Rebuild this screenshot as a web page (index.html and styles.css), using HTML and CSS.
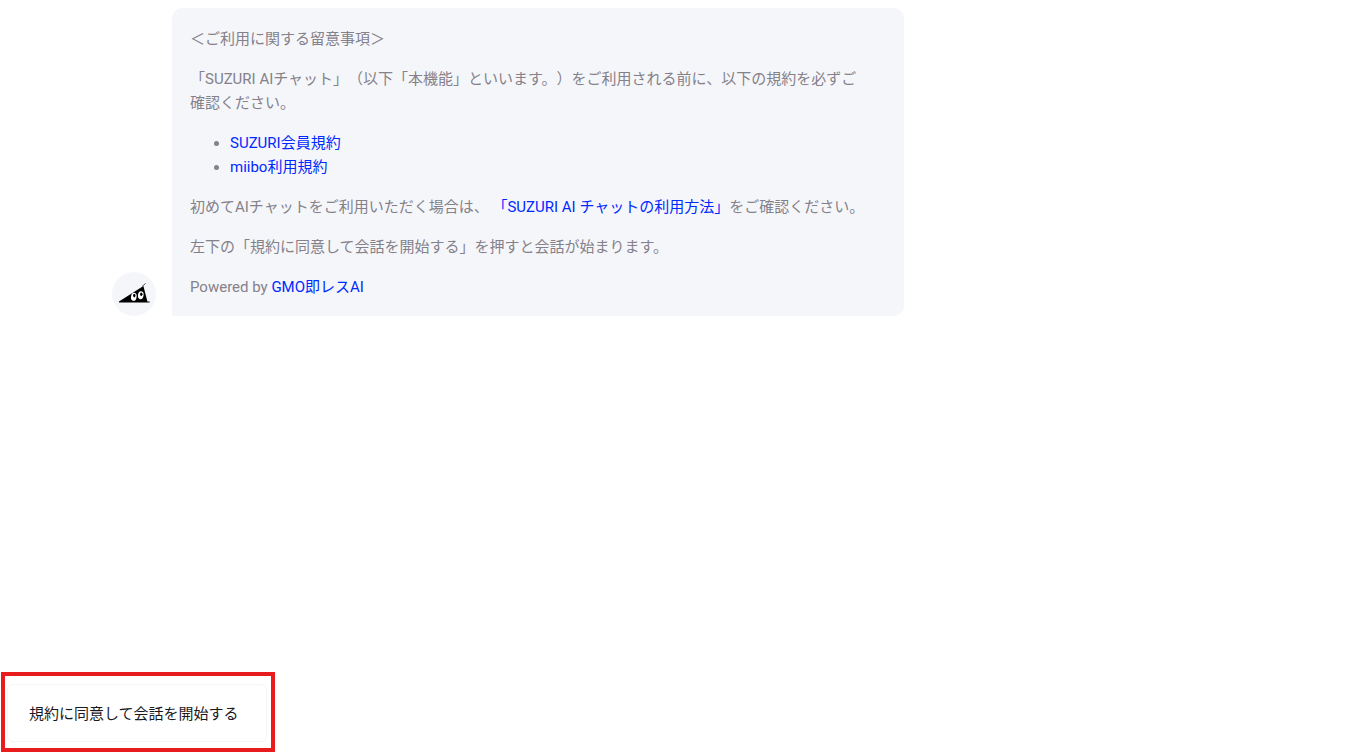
FILE: index.html
```html
<!DOCTYPE html>
<html lang="ja">
<head>
<meta charset="utf-8">
<meta name="viewport" content="width=device-width, initial-scale=1">
<title>SUZURI AIチャット</title>
<link rel="stylesheet" href="styles.css">
</head>
<body>
<main class="chat">
  <article class="message">
    <div class="avatar">
      <svg viewBox="0 0 44 44" role="img" aria-label="SUZURI">
        <path d="M7 30.6V29.6L31.4 14 35.4 29.4H37.6V30.6Z" fill="#000"/>
        <path d="M30 14.5 33.6 11.4" stroke="#555" fill="none"/>
        <g fill="#fff">
          <ellipse cx="21.8" cy="24.8" rx="2.8" ry="4" transform="rotate(8 21.8 24.8)"/>
          <ellipse cx="28.8" cy="23.2" rx="2.8" ry="4" transform="rotate(8 28.8 23.2)"/>
        </g>
        <ellipse cx="22.3" cy="23.6" rx="1.2" ry="1.8" fill="#000"/>
        <ellipse cx="29.3" cy="22.2" rx="1.2" ry="1.8" fill="#000"/>
      </svg>
    </div>
    <div class="bubble">
      <p>＜ご利用に関する留意事項＞</p>
      <p>「SUZURI AIチャット」（以下「本機能」といいます。）をご利用される前に、以下の規約を必ずご確認ください。</p>
      <ul>
        <li><a href="#">SUZURI会員規約</a></li>
        <li><a href="#">miibo利用規約</a></li>
      </ul>
      <p>初めてAIチャットをご利用いただく場合は、 <a href="#">「SUZURI AI チャットの利用方法」</a>をご確認ください。</p>
      <p>左下の「規約に同意して会話を開始する」を押すと会話が始まります。</p>
      <p>Powered by <a href="#">GMO即レスAI</a></p>
    </div>
  </article>
</main>
<footer class="actions">
  <div class="highlight">
    <button class="start" type="button">規約に同意して会話を開始する</button>
  </div>
</footer>
</body>
</html>
```

FILE: styles.css
```css
* {
  box-sizing: border-box;
}

body {
  display: flex;
  flex-direction: column;
  min-height: 100vh;
  margin: 0;
  background: #fff;
  color: #84818a;
  font: 15px/24px Roboto, "Noto Sans CJK JP", sans-serif;
  text-spacing-trim: space-all;
}

.chat {
  flex: 1;
  padding: 8px 112px;
}

.message {
  display: flex;
  align-items: flex-end;
  gap: 16px;
}

.avatar {
  flex: none;
  width: 44px;
  height: 44px;
  border-radius: 50%;
  background: #f5f6fa;
}

.avatar svg {
  display: block;
}

.bubble {
  display: flex;
  flex: 0 1 732px;
  flex-direction: column;
  gap: 16px;
  padding: 19px 36px 17px 18px;
  border-radius: 10px 10px 10px 0;
  background: #f5f6fa;
}

.bubble p,
.bubble ul {
  margin: 0;
}

.bubble ul {
  padding-left: 40px;
}

.bubble a {
  color: #0029ff;
  text-decoration: none;
}

.actions {
  display: flex;
  padding: 1px;
}

.highlight {
  padding: 8px 4px 6px 2px;
  border: 4px solid #e81c1c;
}

.start {
  min-width: 260px;
  padding: 17px 21px 15px;
  border: 1px solid #f5f5f7;
  border-radius: 6px;
  background: #fff;
  color: #1a1a1e;
  font: inherit;
  text-align: left;
  cursor: pointer;
}
```
